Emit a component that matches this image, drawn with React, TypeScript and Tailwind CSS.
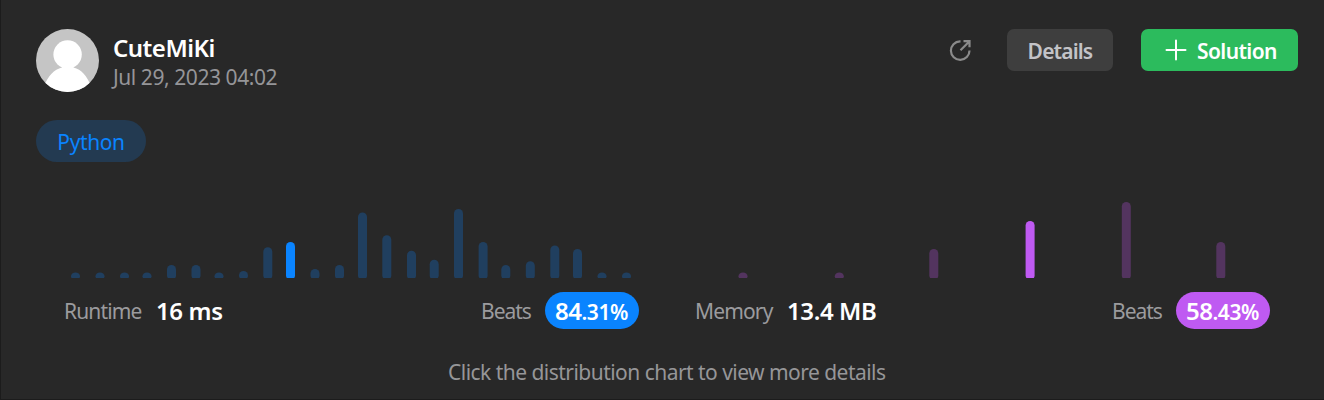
type Bar = { x: number; top: number; active?: boolean };

const runtimeBars: Bar[] = [
  { x: 71, top: 272.5 }, { x: 95.5, top: 272.5 }, { x: 120, top: 272.5 }, { x: 142.5, top: 272.5 },
  { x: 167, top: 265 }, { x: 191.5, top: 265 }, { x: 214.5, top: 272.5 }, { x: 239, top: 271 },
  { x: 263.3, top: 247.3 }, { x: 286, top: 242, active: true }, { x: 310.5, top: 269 }, { x: 335, top: 265 },
  { x: 358, top: 212.5 }, { x: 382.3, top: 235.3 }, { x: 407, top: 250.7 }, { x: 429.7, top: 259.7 },
  { x: 454, top: 209 }, { x: 478.6, top: 242 }, { x: 501.3, top: 265 }, { x: 525.8, top: 261.3 },
  { x: 550.3, top: 245.5 }, { x: 573, top: 249 }, { x: 597.5, top: 272.5 }, { x: 622, top: 272.5 },
];

const memoryBars: Bar[] = [
  { x: 738.5, top: 272.5 }, { x: 834.8, top: 272.5 }, { x: 929.3, top: 249 },
  { x: 1025.6, top: 221, active: true }, { x: 1121.8, top: 202 }, { x: 1216.3, top: 242 },
];

function Distribution({ bars, origin, color, muted }: { bars: Bar[]; origin: number; color: string; muted: string }) {
  return (
    <svg className="block h-[116px] w-[575px]" viewBox={`${origin} 162 575 116`}>
      {bars.map((b) => (
        <rect key={b.x} x={b.x} y={b.top} width="9" height={280 - b.top} rx="4.5" ry={Math.min(4.5, (280 - b.top) / 2)} fill={b.active ? color : muted} />
      ))}
    </svg>
  );
}

type StatProps = {
  label: string;
  value: string;
  whole: string;
  fraction: string;
  pillClass: string;
};

function Stat({ label, value, whole, fraction, pillClass }: StatProps) {
  return (
    <div className="mt-3.5 flex h-[37px] w-[575px] items-center">
      <span className="w-[92px] pt-0.5 text-[21px] tracking-[-0.85px] text-[#9b9b9e]">{label}</span>
      <span className="text-[24px] font-semibold tracking-[-0.4px] text-white">{value}</span>
      <span className="ml-auto w-[64px] pt-0.5 text-[21px] tracking-[-1px] text-[#9b9b9e]">Beats</span>
      <span className={`flex h-[37px] w-[94px] items-baseline rounded-full pl-2.5 font-semibold leading-[37px] text-white ${pillClass}`}>
        <span className="text-[24px] tracking-[-0.5px]">{whole}</span>
        <span className="text-[21px] tracking-[-0.4px]">{fraction}</span>
      </span>
    </div>
  );
}

export default function App() {
  return (
    <main className="flex h-[400px] w-[1324px] flex-col overflow-hidden whitespace-nowrap border-b border-l border-[#1c1c1c] bg-[#282828] font-['Noto_Sans','Open_Sans',sans-serif]">
      <header className="flex h-[120px] pl-[35px] pr-[26px] pt-[29px]">
        <svg className="size-[63px] shrink-0" viewBox="0 0 63 63">
          <defs>
            <clipPath id="avatar"><circle cx="31.5" cy="31.5" r="31.5" /></clipPath>
          </defs>
          <g clipPath="url(#avatar)">
            <rect width="63" height="63" fill="#c5c5c5" />
            <circle cx="31.6" cy="25.5" r="14.2" fill="#fff" />
            <path d="M8 57C12 47 18 40.500 26 38.500V35H37.500V38.500C45.500 40.500 51 47 55 57V63H8Z" fill="#fff" />
          </g>
        </svg>
        <div className="ml-3.5 flex flex-col pt-[3px]">
          <span className="text-[24px] font-semibold leading-[31px] tracking-[-0.5px] text-white">CuteMiKi</span>
          <span className="text-[21px] leading-[28px] tracking-[-0.43px] text-[#959598]">Jul 29, 2023 04:02</span>
        </div>
        <svg className="ml-auto mr-[35px] mt-[9px] size-6 shrink-0" viewBox="0 0 24 24" fill="none" stroke="#8b8b8b" strokeWidth="2.2" strokeLinejoin="miter">
          <path d="M12.500 3.300H12A9.300 9.300 0 1 0 21.500 12.500M15.500 3.200H21.500V9.200M21.500 3.200L12.500 12.200" />
        </svg>
        <button className="h-[42px] w-[106px] rounded-[7px] bg-[#3e3e3e] pt-[3px] text-[21px] font-semibold tracking-[-0.85px] text-[#c3c3c7]">Details</button>
        <button className="ml-7 flex h-[42px] w-[157px] items-center rounded-[7px] bg-[#2cbb5d] pl-6 text-[21px] font-semibold tracking-[-0.6px] text-white">
          <svg className="mr-2.5 size-[22px]" viewBox="0 0 22 22" fill="none" stroke="white" strokeWidth="2" strokeLinecap="round">
            <path d="M11 1.500V20.500M1.500 11H20.500" />
          </svg>
          <span className="pt-[3px]">Solution</span>
        </button>
      </header>
      <div className="pl-[35px]">
        <span className="flex h-[42px] w-[110px] items-center justify-center rounded-full bg-[#233a51] pt-[3px] text-[21px] tracking-[-0.4px] text-[#0a84ff]">Python</span>
      </div>
      <section className="flex gap-14 pl-[63px]">
        <div>
          <Distribution bars={runtimeBars} origin={64} color="#0a84ff" muted="#203f5f" />
          <Stat label="Runtime" value="16 ms" whole="84" fraction=".31%" pillClass="bg-[#0a84ff]" />
        </div>
        <div>
          <Distribution bars={memoryBars} origin={695} color="#bf5af2" muted="#53345f" />
          <Stat label="Memory" value="13.4 MB" whole="58" fraction=".43%" pillClass="bg-[#bf5af2]" />
        </div>
      </section>
      <p className="ml-[447px] mt-[29px] text-[21px] leading-[28px] tracking-[-0.53px] text-[#969698]">Click the distribution chart to view more details</p>
    </main>
  );
}
